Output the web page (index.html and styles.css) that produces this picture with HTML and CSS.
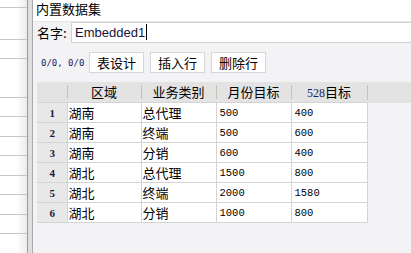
FILE: index.html
```html
<!DOCTYPE html>
<html lang="zh-CN">
<head>
    <meta charset="UTF-8">
    <title>内置数据集</title>
    <link rel="stylesheet" href="styles.css">
</head>
<body>
    <div class="sheet"></div>
    <div class="splitter"></div>

    <div class="dialog">
        <div class="title">内置数据集</div>

        <div class="name-row">
            <label for="dsName">名字:</label>
            <div class="name-input" id="dsName">Embedded1<span class="caret"></span></div>
        </div>

        <div class="toolbar">
            <span class="pos">0/0, 0/0</span>
            <button class="tool-button">表设计</button>
            <button class="tool-button">插入行</button>
            <button class="tool-button">删除行</button>
        </div>

        <!-- data grid -->
        <table class="grid">
            <thead>
                <tr>
                    <th class="num-col"></th>
                    <th class="c-area">区域</th>
                    <th class="c-type">业务类别</th>
                    <th class="c-month">月份目标</th>
                    <th class="c-528"><span class="digits">528</span>目标</th>
                    <th class="filler"></th>
                </tr>
            </thead>
            <tbody>
                <tr><td class="num">1</td><td>湖南</td><td>总代理</td><td class="val">500</td><td class="val">400</td><td class="filler"></td></tr>
                <tr><td class="num">2</td><td>湖南</td><td>终端</td><td class="val">500</td><td class="val">600</td><td class="filler"></td></tr>
                <tr><td class="num">3</td><td>湖南</td><td>分销</td><td class="val">600</td><td class="val">400</td><td class="filler"></td></tr>
                <tr><td class="num">4</td><td>湖北</td><td>总代理</td><td class="val">1500</td><td class="val">800</td><td class="filler"></td></tr>
                <tr><td class="num">5</td><td>湖北</td><td>终端</td><td class="val">2000</td><td class="val">1580</td><td class="filler"></td></tr>
                <tr><td class="num">6</td><td>湖北</td><td>分销</td><td class="val">1000</td><td class="val">800</td><td class="filler"></td></tr>
            </tbody>
        </table>
    </div>
</body>
</html>
```

FILE: styles.css
```css
html, body {
    height: 100%;
}

body {
    margin: 0;
    display: flex;
    overflow: hidden;
    font-family: "Noto Sans CJK SC", "Liberation Sans", sans-serif;
    font-size: 13px;
    color: #000000;
    background: #f3f3f5;
}

/* spreadsheet behind the dialog */
.sheet {
    width: 27px;
    flex: none;
    background:
        linear-gradient(to bottom, transparent 7px, #c6c6c6 7px, #c6c6c6 8px, transparent 8px) no-repeat,
        repeating-linear-gradient(to bottom, transparent 0, transparent 18.5px, #c6c6c6 18.5px, #c6c6c6 19.5px) 0 20px / 100% 100% no-repeat,
        linear-gradient(to right, #ffffff 60%, #ececec);
}

.splitter {
    width: 4px;
    flex: none;
    background: #dedede;
    border-left: 1px solid #9c9c9c;
    border-right: 1px solid #a9a9a9;
}

.dialog {
    flex: 1;
    min-width: 0;
    display: flex;
    flex-direction: column;
    background: #f3f3f5;
}

.title {
    height: 22px;
    line-height: 18px;
    padding-left: 3px;
    background: #ffffff;
    border-bottom: 1px solid #e6e6e6;
    box-sizing: border-box;
}

.name-row {
    display: flex;
    align-items: center;
    height: 21px;
    padding-left: 4px;
}

.name-row label {
    width: 34px;
    flex: none;
}

.name-input {
    flex: 1;
    height: 21px;
    box-sizing: border-box;
    padding-left: 3px;
    background: #ffffff;
    border: 1px solid #d2d2d2;
    border-right: none;
    font-family: "Liberation Sans", sans-serif;
    font-size: 13px;
    line-height: 19px;
    color: #14143c;
}

.caret {
    display: inline-block;
    width: 1px;
    height: 16px;
    margin-left: 1px;
    vertical-align: -3px;
    background: #000000;
}

.toolbar {
    display: flex;
    align-items: center;
    gap: 6px;
    height: 21px;
    margin-top: 9px;
    padding-left: 8px;
}

.pos {
    font-family: "DejaVu Sans Mono", monospace;
    font-size: 9px;
    color: #1a1a66;
    width: 42px;
    white-space: nowrap;
}

.tool-button {
    height: 21px;
    width: 55px;
    padding: 0;
    background: #ffffff;
    border: 1px solid #d6d6d6;
    font-family: "Noto Sans CJK SC", sans-serif;
    font-size: 13px;
    line-height: 18px;
    color: #000000;
}

.grid {
    margin-top: 9px;
    margin-left: 4px;
    border-collapse: collapse;
    table-layout: fixed;
    width: calc(100% - 4px);
}

.grid th {
    height: 20px;
    padding: 0;
    background: #e3e3e3;
    font-weight: normal;
    text-align: center;
    position: relative;
    line-height: 18px;
}

.grid th + th::before {
    content: "";
    position: absolute;
    left: 0;
    top: 3px;
    bottom: 3px;
    width: 1px;
    background: #c8c2b6;
}

.grid td {
    height: 19px;
    padding: 0 0 0 1px;
    background: #ffffff;
    border: 1px solid #d4d4d4;
    line-height: 18px;
    white-space: nowrap;
}

.grid .num-col { width: 30px; }
.grid .c-area { width: 74px; }
.grid .c-type { width: 75px; }
.grid .c-month { width: 75px; }
.grid .c-528 { width: 76px; }

.digits {
    font-family: "Liberation Serif", serif;
    font-size: 12px;
    color: #1a1a66;
}

.grid td.num {
    background: #e8e8e8;
    border-left: none;
    text-align: center;
    font-family: "Liberation Serif", serif;
    font-size: 11px;
    font-weight: bold;
    color: #1a1a40;
}

.grid td.val {
    padding-left: 3px;
    font-family: "Liberation Mono", monospace;
    font-size: 10.5px;
    color: #000000;
}

.grid td.filler {
    background: transparent;
    border: none;
}
```
